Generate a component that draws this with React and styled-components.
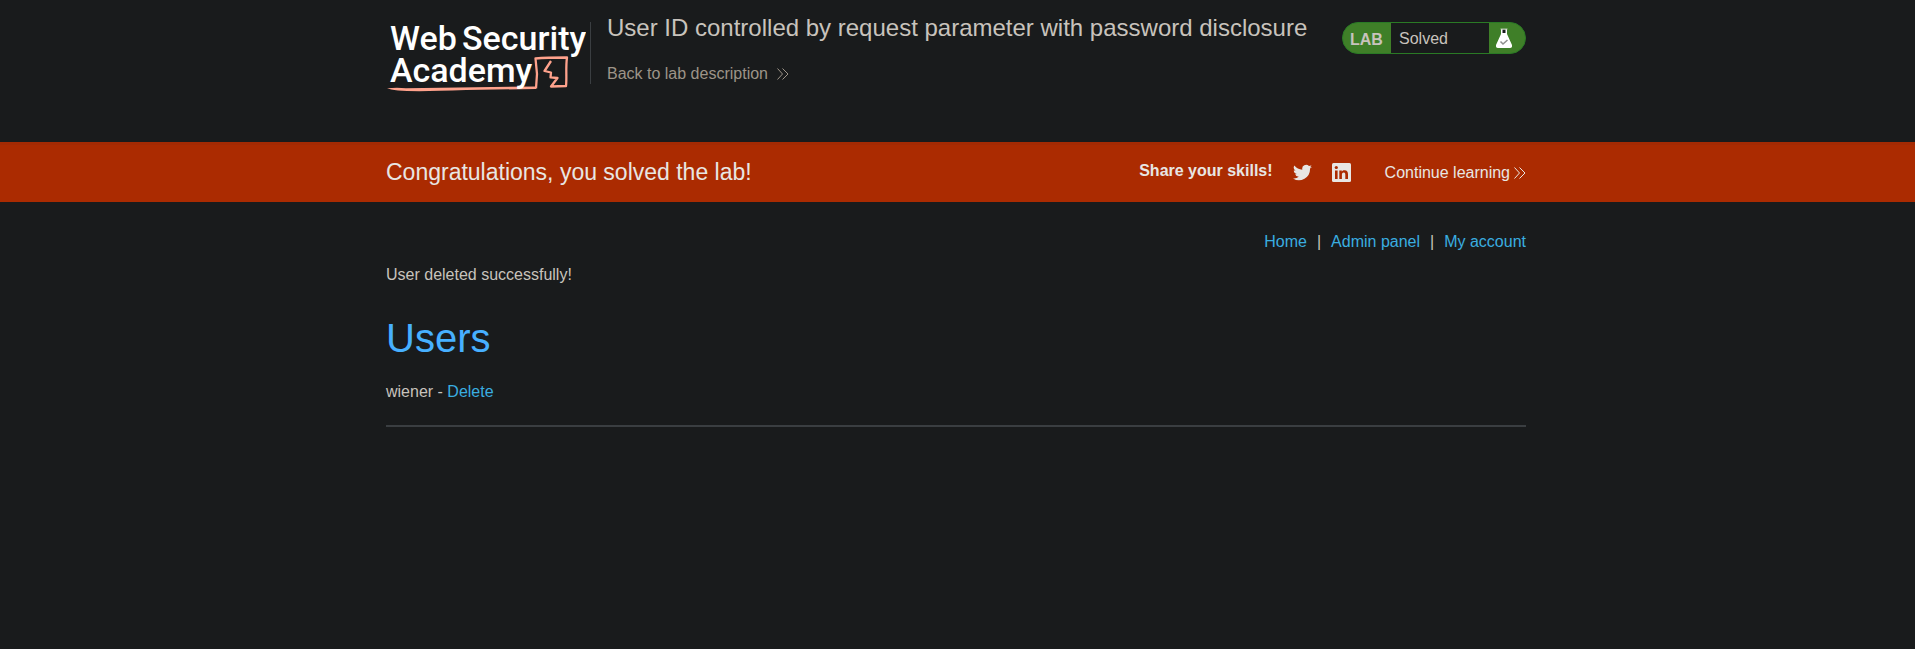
import React from "react";
import styled, { createGlobalStyle } from "styled-components";

const Global = createGlobalStyle`
  * { box-sizing: border-box; }
  body {
    margin: 0;
    background: #191b1c;
    color: #c8c3bc;
    font: 16px/24px "Liberation Sans", Arial, sans-serif;
  }
  a { color: #3aaee0; text-decoration: none; }
  svg { display: block; flex: none; }
`;

const Container = styled.div`
  width: 100%;
  max-width: 1173px;
  margin: 0 auto;
  padding: 0 18px 0 15px;
`;

const Header = styled.header`
  padding-top: 14px;
  min-height: 142px;
`;

const HeaderRow = styled(Container)`
  display: flex;
  align-items: flex-start;
`;

const LogoLink = styled.a`
  padding-right: 4px;
`;

const Divider = styled.span`
  width: 1px;
  height: 62px;
  margin-top: 8px;
  background: #3a3e41;
`;

const LogoWord = styled.text`
  font: 500 34px Roboto, "Liberation Sans", sans-serif;
  fill: #fff;
`;

const TitleBlock = styled.div`
  flex: 1;
  padding-left: 16px;
`;

const Title = styled.h2`
  margin: 0 0 20px;
  font-size: 24px;
  line-height: 28px;
  font-weight: 400;
`;

const IconLink = styled.a`
  display: inline-flex;
  align-items: center;
  gap: ${(p) => p.$gap};
  color: ${(p) => p.$color};
`;

const Badge = styled.div`
  display: flex;
  width: 184px;
  height: 32px;
  margin-top: 8px;
  border: 1px solid #2a7a25;
  border-radius: 16px;
  overflow: hidden;
  line-height: 32px;
  background: #3f7f28;
`;

const BadgeLabel = styled.strong`
  width: 48px;
  padding-left: 7px;
  line-height: 34px;
`;

const BadgeStatus = styled.span`
  flex: 1;
  padding-left: 8px;
  background: #191b1c;
`;

const BadgeIcon = styled.span`
  width: 36px;
  padding: 5px 0 0 6px;
`;

const Banner = styled.section`
  background: #ab2b01;
  border-top: 3px solid #a42a03;
  color: #e8e6e3;
`;

const BannerRow = styled(Container)`
  display: flex;
  align-items: center;
  height: 57px;
  padding-bottom: 2px;
`;

const BannerTitle = styled.h4`
  flex: 1;
  margin: 0;
  padding-bottom: 2px;
  font-size: 23px;
  font-weight: 400;
`;

const Share = styled.div`
  display: flex;
  align-items: center;
  gap: 20px;
  margin-right: 34px;
`;

const ShareLabel = styled.strong`
  padding-bottom: 4px;
`;

const Main = styled(Container).attrs({ as: "main" })`
  padding-top: 28px;
`;

const Nav = styled.nav`
  display: flex;
  justify-content: flex-end;
  gap: 10px;
`;

const Message = styled.p`
  margin: 9px 0 27px;
`;

const Heading = styled.h1`
  margin: 0 0 18px;
  font-size: 40px;
  line-height: 48px;
  font-weight: 400;
  color: #47b0ff;
`;

const UserRow = styled.div`
  padding-bottom: 21px;
  border-bottom: 2px solid #3a3e41;
`;

const Chevrons = () => (
  <svg width="12" height="14" viewBox="0 0 12 14" fill="none" stroke="currentColor" aria-hidden="true">
    <path d="M.5 1.5 5.500 7 .5 12.500M5.500 1.500 11 7 5.500 12.500" />
  </svg>
);

const Logo = () => (
  <svg width="200" height="84" viewBox="0 -8 200 84" role="img" aria-label="Web Security Academy">
    <LogoWord x="4" y="28">Web</LogoWord>
    <LogoWord x="76" y="28">Security</LogoWord>
    <path
      d="M1 66.300Q10 65.500 20 66.200L150 64.500V67L80 68Q30 70 12 68.500Q4 67.500 1 66.300Z"
      fill="#ffa28c"
    />
    <path
      d="M150 66.500 151 52 149.500 36.500C160 35.500 171 35.500 181 35.500C179.500 45 181 56 180 64L165 64.500L171.500 56L164.500 55.300L165 50.500L158.500 49L165 39"
      fill="none"
      stroke="#ffa28c"
      strokeWidth="2.300"
      strokeLinejoin="round"
    />
    <LogoWord x="4" y="60">Academy</LogoWord>
  </svg>
);

const Flask = () => (
  <svg width="18" height="20" viewBox="0 0 18 20" aria-hidden="true">
    <path d="M6 1H12V6L17 17Q17.500 20 15 20H3Q.5 20 1 17L6 6Z" fill="#fff" />
    <path d="M7.500 1.500H10.500V5H7.500Z" fill="#191b1c" />
    <path d="M5.500 1H12.500" stroke="#b5c9ad" strokeWidth="1" />
    <path d="M5.500 13.500 8 16 12.500 12" fill="none" stroke="#8f8f8f" strokeWidth="1.500" />
  </svg>
);

const Twitter = () => (
  <svg width="19" height="19" viewBox="0 0 24 24" fill="currentColor">
    <path d="M24 4.600a10 10 0 0 1-2.800.8 5 5 0 0 0 2.100-2.700 10 10 0 0 1-3.100 1.200 4.900 4.900 0 0 0-8.400 4.500A14 14 0 0 1 1.700 3.200a4.900 4.900 0 0 0 1.500 6.500 5 5 0 0 1-2.200-.6 4.900 4.900 0 0 0 3.900 4.900 5 5 0 0 1-2.200.1 4.900 4.900 0 0 0 4.600 3.400A9.900 9.900 0 0 1 0 19.500 14 14 0 0 0 21.500 7.100 10 10 0 0 0 24 4.600Z" />
  </svg>
);

const LinkedIn = () => (
  <svg width="19" height="19" viewBox="0 0 19 19" fill="none">
    <rect width="19" height="19" rx="1.500" fill="#e8e6e3" />
    <path d="M3 7.500H5.600V16H3ZM7.300 7.500H9.800V8.700C10.400 7.700 11.300 7.300 12.500 7.300 15.300 7.300 16 9 16 11.400V16H13.300V11.800C13.300 10.700 13.200 9.500 11.700 9.500 10.300 9.500 9.900 10.600 9.900 11.700V16H7.300Z" fill="#ab2b01" />
    <circle cx="4.300" cy="4.500" r="1.600" fill="#ab2b01" />
  </svg>
);

export default function App() {
  return (
    <>
      <Global />
      <Header>
        <HeaderRow>
          <LogoLink href="#academy"><Logo /></LogoLink>
          <Divider />
          <TitleBlock>
            <Title>User ID controlled by request parameter with password disclosure</Title>
            <IconLink href="#lab" $gap="9px" $color="#9d9488">
              Back to lab description <Chevrons />
            </IconLink>
          </TitleBlock>
          <Badge>
            <BadgeLabel>LAB</BadgeLabel>
            <BadgeStatus>Solved</BadgeStatus>
            <BadgeIcon><Flask /></BadgeIcon>
          </Badge>
        </HeaderRow>
      </Header>
      <Banner>
        <BannerRow>
          <BannerTitle>Congratulations, you solved the lab!</BannerTitle>
          <Share>
            <ShareLabel>Share your skills!</ShareLabel>
            <IconLink href="#twitter" $color="#e8e6e3" aria-label="Share on Twitter"><Twitter /></IconLink>
            <IconLink href="#linkedin" $color="#e8e6e3" aria-label="Share on LinkedIn"><LinkedIn /></IconLink>
          </Share>
          <IconLink href="#continue" $gap="4px" $color="#e8e6e3">
            Continue learning <Chevrons />
          </IconLink>
        </BannerRow>
      </Banner>
      <Main>
        <Nav>
          <a href="#home">Home</a>
          <span>|</span>
          <a href="#admin">Admin panel</a>
          <span>|</span>
          <a href="#account">My account</a>
        </Nav>
        <Message>User deleted successfully!</Message>
        <Heading>Users</Heading>
        <UserRow>
          wiener - <a href="#delete">Delete</a>
        </UserRow>
      </Main>
    </>
  );
}
